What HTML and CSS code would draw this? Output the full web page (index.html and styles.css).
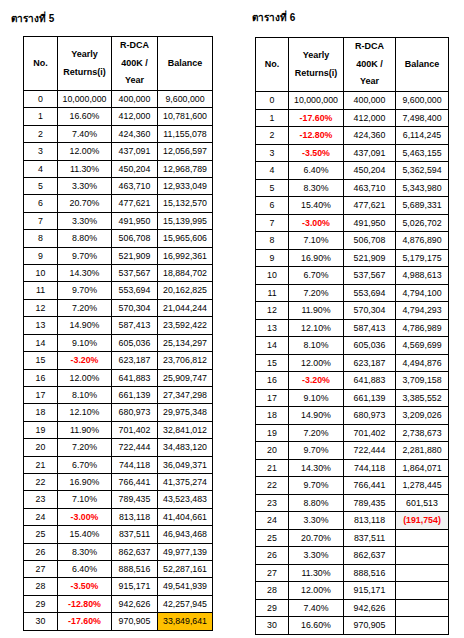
FILE: index.html
```html
<!DOCTYPE html>
<html lang="th">
<head>
<meta charset="utf-8">
<title>ตารางที่ 5 และ 6</title>
<link rel="stylesheet" href="styles.css">
</head>
<body>
<div class="page">
  <section class="panel panel-left">
    <h2 class="title">ตารางที่ 5</h2>
    <table class="grid grid-left">
      <colgroup><col class="c-no"><col class="c-ret"><col class="c-dca"><col class="c-bal"></colgroup>
      <thead>
        <tr><th>No.</th><th>Yearly<br>Returns(i)</th><th>R-DCA<br>400K /<br>Year</th><th>Balance</th></tr>
      </thead>
      <tbody>
        <tr><td>0</td><td>10,000,000</td><td>400,000</td><td>9,600,000</td></tr>
        <tr><td>1</td><td>16.60%</td><td>412,000</td><td>10,781,600</td></tr>
        <tr><td>2</td><td>7.40%</td><td>424,360</td><td>11,155,078</td></tr>
        <tr><td>3</td><td>12.00%</td><td>437,091</td><td>12,056,597</td></tr>
        <tr><td>4</td><td>11.30%</td><td>450,204</td><td>12,968,789</td></tr>
        <tr><td>5</td><td>3.30%</td><td>463,710</td><td>12,933,049</td></tr>
        <tr><td>6</td><td>20.70%</td><td>477,621</td><td>15,132,570</td></tr>
        <tr><td>7</td><td>3.30%</td><td>491,950</td><td>15,139,995</td></tr>
        <tr><td>8</td><td>8.80%</td><td>506,708</td><td>15,965,606</td></tr>
        <tr><td>9</td><td>9.70%</td><td>521,909</td><td>16,992,361</td></tr>
        <tr><td>10</td><td>14.30%</td><td>537,567</td><td>18,884,702</td></tr>
        <tr><td>11</td><td>9.70%</td><td>553,694</td><td>20,162,825</td></tr>
        <tr><td>12</td><td>7.20%</td><td>570,304</td><td>21,044,244</td></tr>
        <tr><td>13</td><td>14.90%</td><td>587,413</td><td>23,592,422</td></tr>
        <tr><td>14</td><td>9.10%</td><td>605,036</td><td>25,134,297</td></tr>
        <tr><td>15</td><td class="neg">-3.20%</td><td>623,187</td><td>23,706,812</td></tr>
        <tr><td>16</td><td>12.00%</td><td>641,883</td><td>25,909,747</td></tr>
        <tr><td>17</td><td>8.10%</td><td>661,139</td><td>27,347,298</td></tr>
        <tr><td>18</td><td>12.10%</td><td>680,973</td><td>29,975,348</td></tr>
        <tr><td>19</td><td>11.90%</td><td>701,402</td><td>32,841,012</td></tr>
        <tr><td>20</td><td>7.20%</td><td>722,444</td><td>34,483,120</td></tr>
        <tr><td>21</td><td>6.70%</td><td>744,118</td><td>36,049,371</td></tr>
        <tr><td>22</td><td>16.90%</td><td>766,441</td><td>41,375,274</td></tr>
        <tr><td>23</td><td>7.10%</td><td>789,435</td><td>43,523,483</td></tr>
        <tr><td>24</td><td class="neg">-3.00%</td><td>813,118</td><td>41,404,661</td></tr>
        <tr><td>25</td><td>15.40%</td><td>837,511</td><td>46,943,468</td></tr>
        <tr><td>26</td><td>8.30%</td><td>862,637</td><td>49,977,139</td></tr>
        <tr><td>27</td><td>6.40%</td><td>888,516</td><td>52,287,161</td></tr>
        <tr><td>28</td><td class="neg">-3.50%</td><td>915,171</td><td>49,541,939</td></tr>
        <tr><td>29</td><td class="neg">-12.80%</td><td>942,626</td><td>42,257,945</td></tr>
        <tr><td>30</td><td class="neg">-17.60%</td><td>970,905</td><td class="final">33,849,641</td></tr>
      </tbody>
    </table>
  </section>
  <section class="panel panel-right">
    <h2 class="title">ตารางที่ 6</h2>
    <table class="grid grid-right">
      <colgroup><col class="c-no"><col class="c-ret"><col class="c-dca"><col class="c-bal"></colgroup>
      <thead>
        <tr><th>No.</th><th>Yearly<br>Returns(i)</th><th>R-DCA<br>400K /<br>Year</th><th>Balance</th></tr>
      </thead>
      <tbody>
        <tr><td>0</td><td>10,000,000</td><td>400,000</td><td>9,600,000</td></tr>
        <tr><td>1</td><td class="neg">-17.60%</td><td>412,000</td><td>7,498,400</td></tr>
        <tr><td>2</td><td class="neg">-12.80%</td><td>424,360</td><td>6,114,245</td></tr>
        <tr><td>3</td><td class="neg">-3.50%</td><td>437,091</td><td>5,463,155</td></tr>
        <tr><td>4</td><td>6.40%</td><td>450,204</td><td>5,362,594</td></tr>
        <tr><td>5</td><td>8.30%</td><td>463,710</td><td>5,343,980</td></tr>
        <tr><td>6</td><td>15.40%</td><td>477,621</td><td>5,689,331</td></tr>
        <tr><td>7</td><td class="neg">-3.00%</td><td>491,950</td><td>5,026,702</td></tr>
        <tr><td>8</td><td>7.10%</td><td>506,708</td><td>4,876,890</td></tr>
        <tr><td>9</td><td>16.90%</td><td>521,909</td><td>5,179,175</td></tr>
        <tr><td>10</td><td>6.70%</td><td>537,567</td><td>4,988,613</td></tr>
        <tr><td>11</td><td>7.20%</td><td>553,694</td><td>4,794,100</td></tr>
        <tr><td>12</td><td>11.90%</td><td>570,304</td><td>4,794,293</td></tr>
        <tr><td>13</td><td>12.10%</td><td>587,413</td><td>4,786,989</td></tr>
        <tr><td>14</td><td>8.10%</td><td>605,036</td><td>4,569,699</td></tr>
        <tr><td>15</td><td>12.00%</td><td>623,187</td><td>4,494,876</td></tr>
        <tr><td>16</td><td class="neg">-3.20%</td><td>641,883</td><td>3,709,158</td></tr>
        <tr><td>17</td><td>9.10%</td><td>661,139</td><td>3,385,552</td></tr>
        <tr><td>18</td><td>14.90%</td><td>680,973</td><td>3,209,026</td></tr>
        <tr><td>19</td><td>7.20%</td><td>701,402</td><td>2,738,673</td></tr>
        <tr><td>20</td><td>9.70%</td><td>722,444</td><td>2,281,880</td></tr>
        <tr><td>21</td><td>14.30%</td><td>744,118</td><td>1,864,071</td></tr>
        <tr><td>22</td><td>9.70%</td><td>766,441</td><td>1,278,445</td></tr>
        <tr><td>23</td><td>8.80%</td><td>789,435</td><td>601,513</td></tr>
        <tr><td>24</td><td>3.30%</td><td>813,118</td><td class="deficit">(191,754)</td></tr>
        <tr><td>25</td><td>20.70%</td><td>837,511</td><td></td></tr>
        <tr><td>26</td><td>3.30%</td><td>862,637</td><td></td></tr>
        <tr><td>27</td><td>11.30%</td><td>888,516</td><td></td></tr>
        <tr><td>28</td><td>12.00%</td><td>915,171</td><td></td></tr>
        <tr><td>29</td><td>7.40%</td><td>942,626</td><td></td></tr>
        <tr><td>30</td><td>16.60%</td><td>970,905</td><td></td></tr>
      </tbody>
    </table>
  </section>
</div>
</body>
</html>
```

FILE: styles.css
```css
html, body {
  margin: 0;
  padding: 0;
  background: #ffffff;
}

body {
  font-family: "Liberation Sans", Arial, sans-serif;
  color: #000000;
  width: 464px;
  height: 638px;
  overflow: hidden;
}

.page {
  display: flex;
  align-items: flex-start;
}

.panel {
  display: flex;
  flex-direction: column;
}

.panel-left {
  width: 252px;
  padding-top: 12px;
}

.panel-right {
  padding-top: 11px;
}

.title {
  margin: 0;
  font-size: 10px;
  font-weight: bold;
  line-height: 14px;
  height: 14px;
  color: #000000;
}

.panel-left .title {
  margin-left: 11px;
}

.panel-right .title {
  margin-left: 0;
}

.grid {
  border-collapse: collapse;
  table-layout: fixed;
  font-size: 8.8px;
}

.grid-left {
  margin-left: 23px;
  margin-top: 10px;
  width: 189px;
}

.grid-right {
  margin-left: 3px;
  margin-top: 12px;
  width: 193px;
}

.grid-left .c-no { width: 34px; }
.grid-left .c-ret { width: 54px; }
.grid-left .c-dca { width: 46px; }
.grid-left .c-bal { width: 55px; }

.grid-right .c-no { width: 33px; }
.grid-right .c-ret { width: 55px; }
.grid-right .c-dca { width: 52px; }
.grid-right .c-bal { width: 53px; }

.grid th,
.grid td {
  border: 1px solid #000000;
  padding: 0;
  text-align: center;
  vertical-align: middle;
  white-space: nowrap;
}

.grid th {
  font-size: 9px;
  font-weight: bold;
  line-height: 17.4px;
  height: 53px;
}

.grid-left td {
  height: 16.4px;
  line-height: 16.4px;
}

.grid-right td {
  height: 16.5px;
  line-height: 16.5px;
}

.neg {
  color: #ff0000;
  font-weight: bold;
}

.final {
  background: #ffc000;
}

.deficit {
  background: #f2f2f2;
  color: #ff0000;
  font-weight: bold;
}
```
